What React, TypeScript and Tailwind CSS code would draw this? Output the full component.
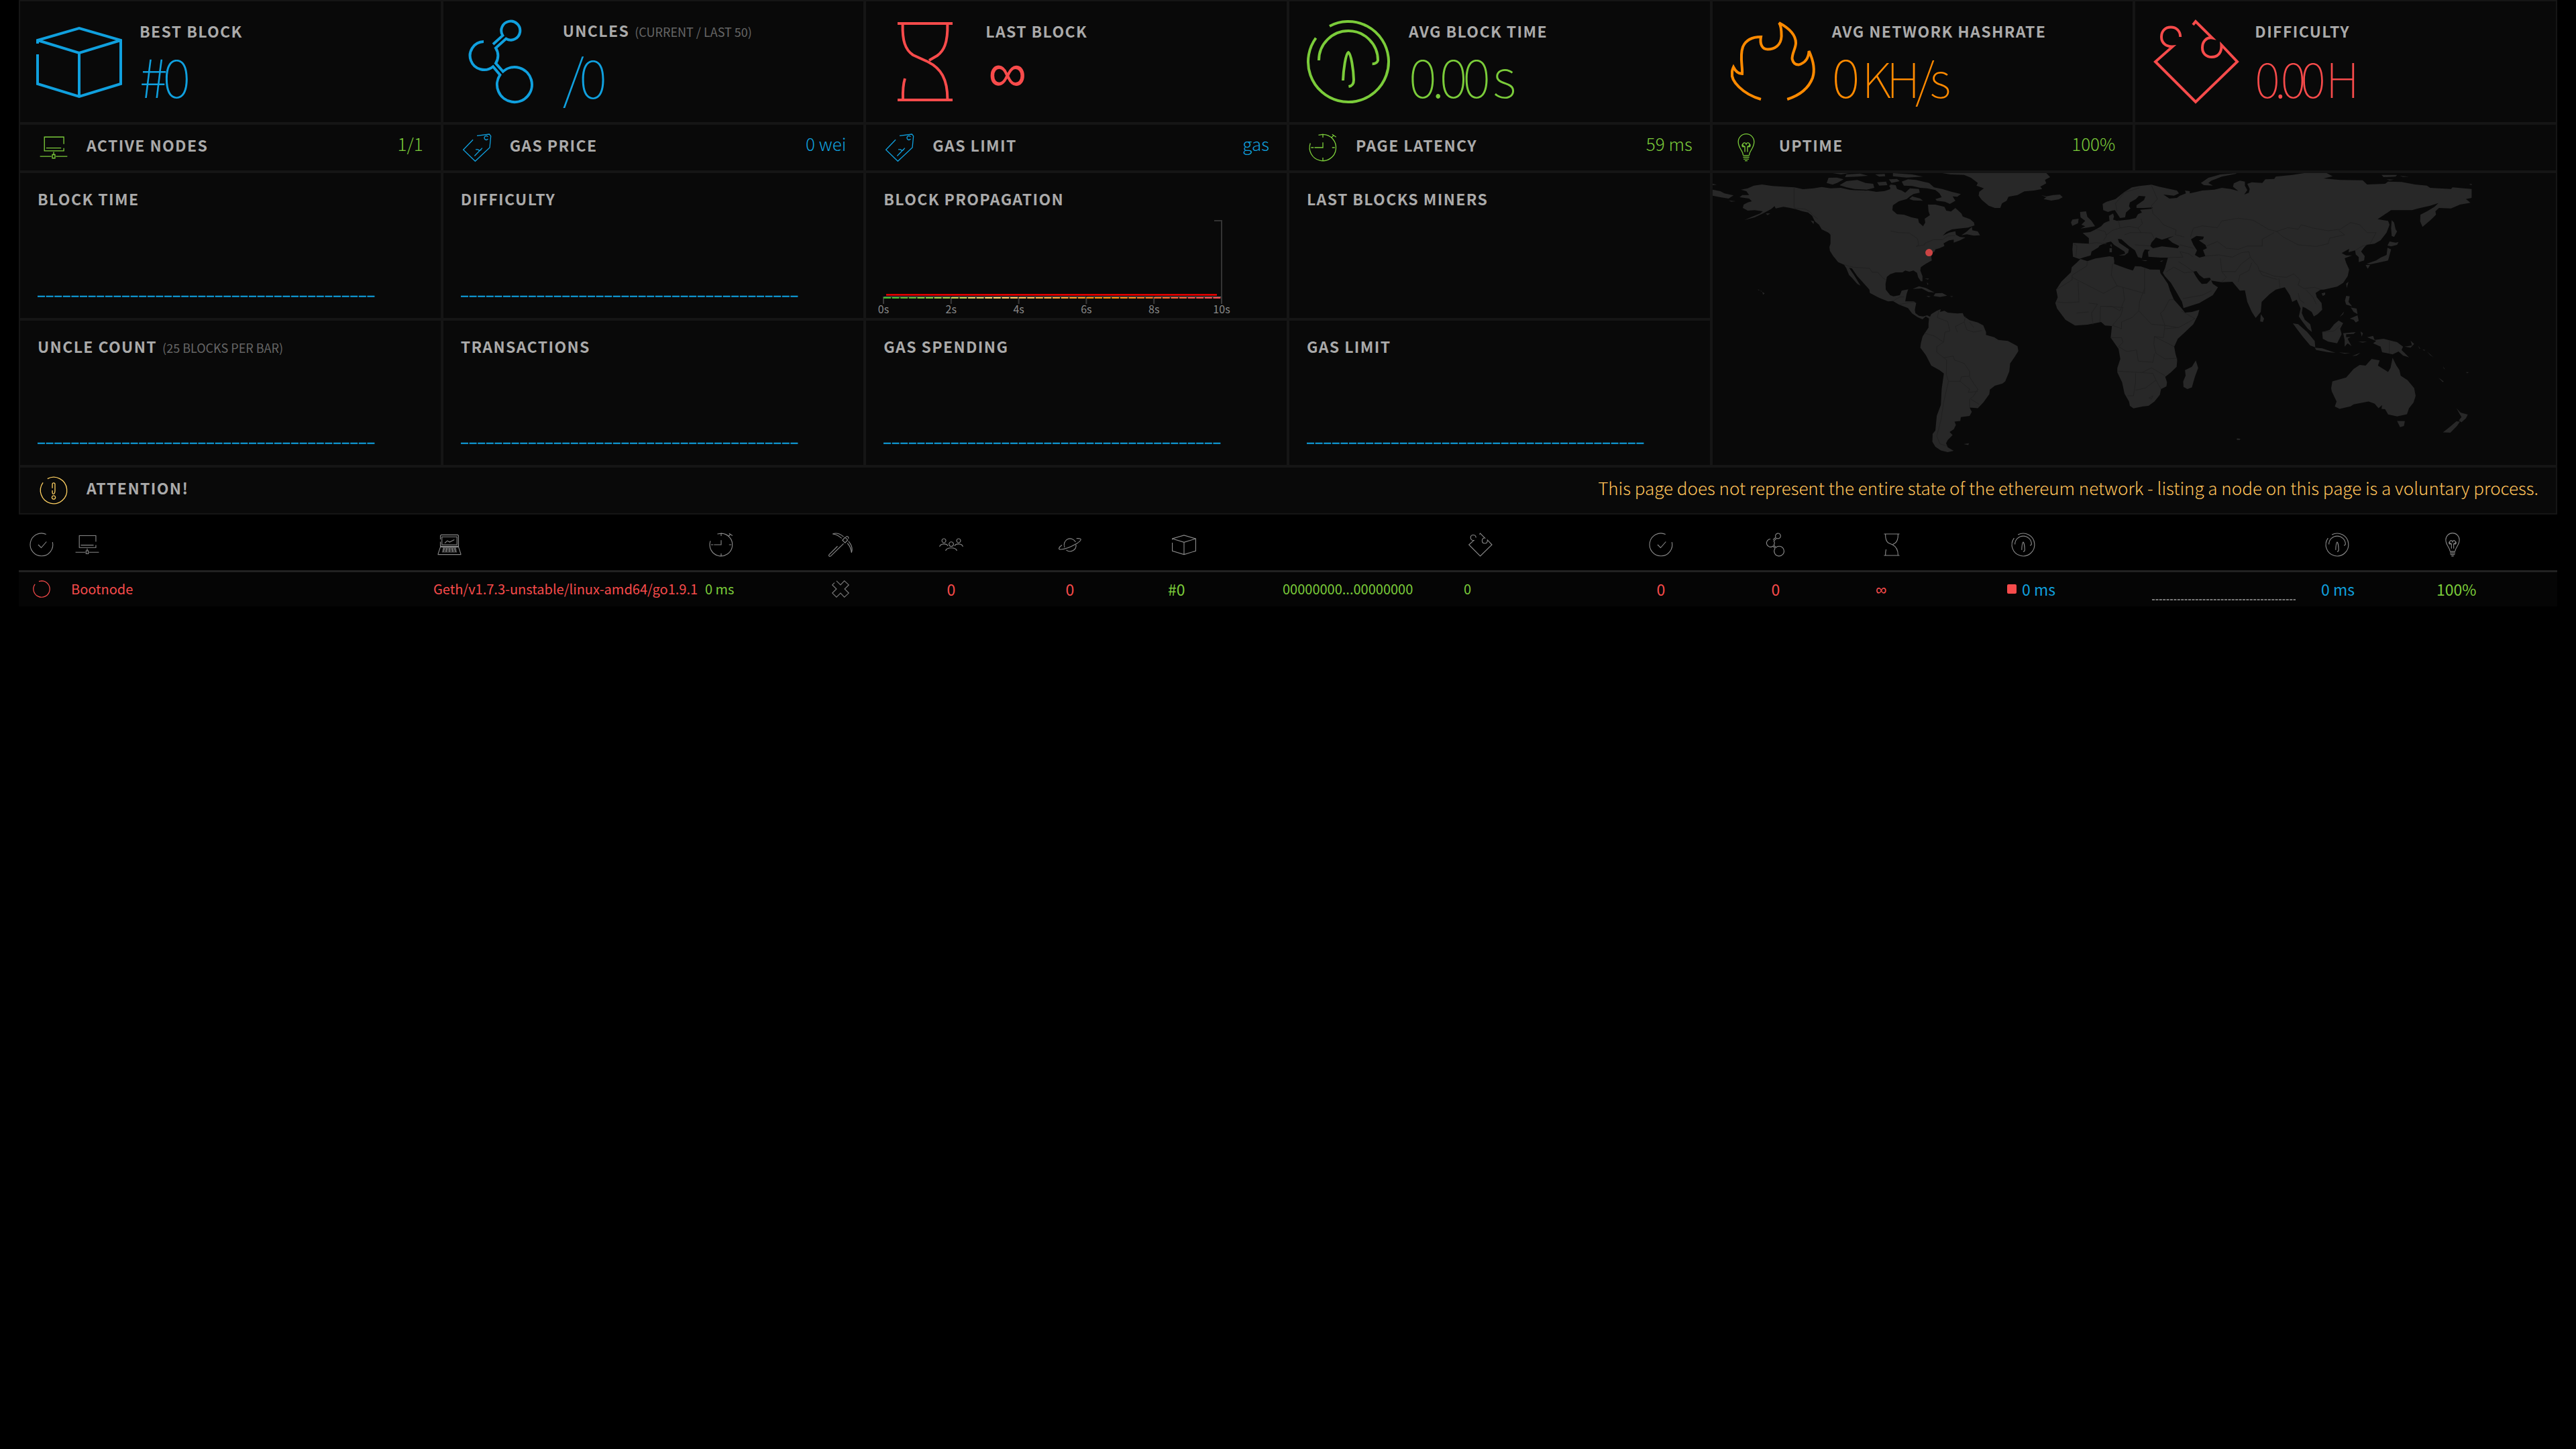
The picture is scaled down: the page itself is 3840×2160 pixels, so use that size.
import React from "react";

type IconName =
  | "block" | "uncles" | "hourglass" | "gauge" | "flame" | "puzzle" | "monitor" | "tag"
  | "clock" | "bulb" | "warning" | "check" | "laptop" | "pickaxe" | "people" | "planet"
  | "ring" | "cross";

const shapes: Record<IconName, React.ReactNode> = {
  block: <path d="M1 18.5V16L32 7l31 9v32.5L32 58 1 48.5V26.5M1 16l31 9.5L63 16M32 25.5V58" />,
  uncles: (
    <path d="M18 17A10.5 10.5 0 1 0 25 35.6L30.2 41.8A13 13 0 1 0 32.4 39.3L27 33.2A10.5 10.5 0 0 0 27 21.8L34.7 14.9A7 7 0 1 0 32.2 12.5L25 19" />
  ),
  hourglass: (
    <path d="M11.5 3.5h41M11.5 60.5h41M15.3 4C15 16 17 23 23 27L34 32C44 37 48.7 45 48.7 60M48.7 4C49 18 46 24 41 27.5L35 31M17 44.5C15.6 49 15.3 54 15.5 60" />
  ),
  gauge: (
    <path d="M7.8 14.3A30 30 0 1 0 18 5.5M10 31A22 22 0 0 1 54 31C53.5 32.8 52 33.6 49.8 33.6M28 46C28.3 38 30 26 32 25C34 26 35.8 38 36 45.5C36 48.5 35 50 32.2 50.5" />
  ),
  flame: (
    <path d="M24 60C10 56 1.500 46 2.500 40.5C2.3 39 2.8 37.5 3.5 36C5 39 7 41 10 41C10.5 36 8 28 10.5 21C13 15 18 13.5 24 13.5C23 19 25 22.8 29 22.8C34 22.8 39 20 39.3 13C39.3 9 39 5 37.5 3C45 7 50 12 50 18C50 22 47 26 47.3 30C48 33 50 34.3 52 34.3C57 33 59.5 29 59.8 24C63 31 64.5 38 62.5 44C59.5 52 53 57 43.6 60" />
  ),
  puzzle: (
    <path d="M31 4.5L33 2L45.400 14.3C41 13.5 38 17 38 21.5C38 26 41 28.5 45 28.5C49.5 28.5 52.5 25.5 52.2 19.5L64 32L33 62L3 32L15.8 20.7C11 21 7.5 18 7.5 13.5C7.5 9 10.5 6.3 14.5 6.3C18.5 6.3 21.6 9 21.6 13.5" />
  ),
  monitor: <path d="M55 24V8H11v31.5h44V33M15 33h34M32 42v6M29 48h6v8h-6zM1 52h26M37 52h26" />,
  tag: (
    <path d="M23 14L1 37L28 63L61 32L63.5 6L60 1.5L32 5M57 7.5A4.5 4.5 0 1 0 57 12.5M26.5 51L44 33M29 36.5L34 36.5L38 39L42 36" />
  ),
  clock: (
    <path d="M3.5 22A30 30 0 1 0 32 2M22 3.5L32 2V9M5 32h6M53 32h6M32 55v6M13 32h19V20M51 10l6-6M53 2l9 6" />
  ),
  bulb: (
    <path d="M25 49C25 40 14 33 14 19A18 18 0 0 1 50 19C50 33 39 40 39 49M25 50h14M25 54h14M26 58h12M29 62h6M29 42V29M35 42V29M29 29A4 4 0 1 1 32 26A4 4 0 1 1 35 29M29 29C23 33 21 27 24 24M35 29C41 33 43 27 40 24" />
  ),
  warning: (
    <path d="M7.8 14.3A30 30 0 1 0 18 5.5M29 27V18A3 3 0 0 1 35 18V32C35 42 29 42 29 36V32M32 44a4 4 0 1 0 .1 0z" />
  ),
  check: <path d="M44 4.4A30 30 0 1 0 61 25M23 32l8 8 14-16" />,
  laptop: (
    <path d="M8 18V8L10 6H54L56 8V36H8V24M12 11H52V32H12ZM8 38L2 56V58H62V56L56 38ZM14 41h36M13 46h38M12 51h40M18 41l-3 10M25 41l-2 10M32 41v10M39 41l2 10M46 41l3 10M19.5 27.5L26.5 21.5L32.5 25L45 18.5" />
  ),
  pickaxe: (
    <path d="M24 36L2 58C-1 62 3 64 6 62L40 29M44 12.5L51 19.5L44 27L37 20ZM35 15C27 8 20 4 11 3.5C22 -1 32 4 40 11M46 12C48 8 54 10 53 16M50 28C56 34 60 42 61 53C65 42 60 31 53 23" />
  ),
  people: (
    <path d="M12.5 16a5.3 5.3 0 1 0 .1 0zM51.5 16a5.3 5.3 0 1 0 .1 0zM32 24.500a6 6 0 1 0 .1 0zM1 37C4 28 20 28 23 35M17 48C20 38 44 38 47 48M41 35C44 28 60 28 63 37" />
  ),
  planet: (
    <path d="M18 39A16 16 0 1 1 47 25M48 32A16 16 0 0 1 22 46M10.700 33C2 39 0 44.500 7 44.500C18 45 34 38 50 29C62 21 67 14 49 15.500" />
  ),
  ring: <path d="M7.8 14.3A30 30 0 1 0 32 2L22 4" />,
  cross: <path d="M10 9L2 17L17 32L2 47L17 62L32 47L46 62L62 47L47 32L62 17L46 2L32 17L17 2" />,
};

function Icon({ name, className, stroke = 2 }: { name: IconName; className: string; stroke?: number }) {
  return (
    <svg
      aria-hidden="true"
      viewBox="0 0 64 64"
      className={`shrink-0 overflow-visible ${className}`}
      fill="none"
      stroke="currentColor"
      strokeWidth={stroke}
    >
      {shapes[name]}
    </svg>
  );
}

const cell = "border-2 border-[#151515] bg-[#090909]";

function Label({ children, note }: { children: React.ReactNode; note?: string }) {
  return (
    <h2 className="text-[23px] leading-[30px] font-bold tracking-[0.06em] whitespace-nowrap text-[#aaa]">
      {children}
      {note && <small className="ml-2 text-[18px] font-normal tracking-normal text-[#666]">{note}</small>}
    </h2>
  );
}

function Big({ icon, label, note, color, children }: {
  icon: IconName; label: string; note?: string; color: string; children: React.ReactNode;
}) {
  return (
    <section className={`${cell} flex min-h-[184px] items-center gap-[26px] pl-6`}>
      <Icon name={icon} className={`size-32 ${color}`} />
      <div className="pt-2">
        <Label note={note}>{label}</Label>
        <p className={`h-[100px] text-[80px] leading-[100px] font-thin tracking-[-0.09em] whitespace-nowrap ${color}`}>{children}</p>
      </div>
    </section>
  );
}

function Small({ icon, label, value, color }: { icon: IconName; label: string; value: string; color: string }) {
  return (
    <section className={`${cell} flex min-h-[72px] items-center pr-[26px] pl-[29px]`}>
      <Icon name={icon} className={`size-[42px] ${color}`} />
      <div className="ml-7 flex-1 pb-2"><Label>{label}</Label></div>
      <span className={`pb-3 text-[26px] leading-[30px] font-light ${color}`}>{value}</span>
    </section>
  );
}

const slots = Array.from({ length: 40 }, (_, i) => i);

function Bars() {
  return (
    <svg aria-hidden="true" viewBox="0 0 506 3" className="block w-[506px]" fill="#10a0de">
      {slots.map((i) => (
        <g key={i}>
          <rect x={i * 12.6} y={0} width={11} height={1} opacity={0.3} />
          <rect x={i * 12.6} y={1} width={11} height={2} opacity={0.9} />
        </g>
      ))}
    </svg>
  );
}

function Chart({ label, note, bars = true }: { label: string; note?: string; bars?: boolean }) {
  return (
    <section className={`${cell} flex min-h-[219px] flex-col justify-between px-[26px] pt-[23px] pb-[31px]`}>
      <Label note={note}>{label}</Label>
      {bars && <Bars />}
    </section>
  );
}

const heat = ["#3fbf2a", "#58b82f", "#7bcc3a", "#9bcb3f", "#c0cf4c", "#e0c75c", "#ffd162", "#ffc35a", "#ffb74f", "#ffa93a", "#ff9e2c", "#ff9318", "#ff8a00", "#ff8a00", "#ff8410", "#fb7318", "#fb6523", "#f85a30", "#f74b40", "#f74b4b"];

function Propagation() {
  return (
    <section className={`${cell} flex min-h-[219px] flex-col px-[26px] pt-[23px]`}>
      <Label>BLOCK PROPAGATION</Label>
      <svg role="img" aria-label="Block propagation histogram" viewBox="0 0 506 144" className="mt-[14px] block w-[506px] overflow-visible">
        <path d="M493 4H504V128" fill="none" stroke="#333" strokeWidth="2" />
        <path d="M0 117.500H504" stroke="#666" strokeWidth="1" />
        {[0, 2, 4, 6, 8, 10].map((s) => (
          <g key={s}>
            <rect x={s * 50.4 - 1} y={117} width={2} height={11} fill="#3a3a3a" />
            <text x={s * 50.4} y={142} textAnchor="middle" className="text-[16px]" fill="#888">{s}s</text>
          </g>
        ))}
        <rect x="4" y="113" width="493" height="3" fill="#b00000" />
        <rect x="4" y="114" width="493" height="1" fill="#ff0000" />
        {slots.map((i) => <rect key={i} x={i * 12.6} y={118} width={11} height={2} fill={heat[Math.floor(i / 2)]} />)}
      </svg>
    </section>
  );
}

function WorldMap() {
  return (
    <section className={`${cell} col-span-2 row-span-2`}>
      <svg role="img" aria-label="Node locations" viewBox="0 0 1257 435" className="block w-full">
        <g fill="#282828">
          <g transform="translate(-13 -8) scale(.4082 .3333)">
            <path d="M135 98L160 92L182 80L212 75L250 82L330 88L362 96L400 92L430 86L462 92L500 90L530 98L560 104L600 102L630 108L660 104L680 96L680 75L700 78L705 95L722 102L735 112L752 92L785 95L788 112L765 118L752 128L740 140L712 150L690 168L688 190L705 208L730 210L758 222L782 228L785 245L800 262L808 245L806 228L825 212L820 195L818 165L845 165L878 175L885 192L902 196L918 180L940 205L945 218L972 230L986 245L988 258L965 268L930 272L905 276L885 288L872 304L895 290L918 284L920 300L935 310L955 312L935 325L912 335L912 322L895 325L875 338L878 350L860 360L845 365L842 375L832 382L830 400L832 415L810 430L792 445L790 460L798 485L798 508L792 508L782 490L778 470L765 460L750 465L735 460L725 468L700 468L680 476L668 488L663 520L664 545L680 570L692 575L715 570L722 550L746 544L740 565L735 598L765 598L775 605L770 635L772 650L785 662L800 665L815 660L828 668L822 675L810 665L798 678L780 668L760 652L745 628L712 612L690 596L672 598L640 582L606 560L604 545L580 512L560 485L540 450L530 448L548 480L572 528L560 520L540 492L530 480L520 450L512 434L490 422L472 395L460 372L458 355L462 340L462 300L455 290L430 275L420 255L405 240L395 215L380 200L360 195L335 185L315 180L290 175L262 182L258 172L245 185L215 205L185 222L148 234L170 222L205 205L215 195L185 190L160 192L142 180L145 165L160 155L175 150L165 138L130 132L140 122L165 122L155 105Z" />
            <path d="M722 62L745 52L775 55L800 62L822 68L840 88L870 95L905 108L938 118L925 130L908 128L918 148L898 162L880 152L850 148L845 140L868 132L860 115L845 100L815 92L790 90L760 82L730 80ZM495 78L520 60L560 55L590 68L618 72L622 90L595 98L550 95L520 88ZM455 45L485 44L510 52L490 66L470 76L448 68ZM520 30L570 26L600 36L560 40L515 42ZM625 30L660 28L662 38L640 40ZM690 24L760 30L800 40L740 44L690 38ZM632 65L665 62L670 78L640 80ZM470 24L530 24L500 30ZM675 80L695 78L705 95L685 95ZM760 128L790 138L800 148L765 146L750 140ZM675 52L705 50L715 60L685 68ZM530 100L590 102L580 110L545 106Z" />
            <path d="M940 302L960 285L978 265L980 280L1000 285L1008 302L985 304L960 298ZM426 265L450 274L470 290L472 300L455 290L430 275ZM390 236L402 240L400 252ZM226 205L242 204L232 212ZM762 542L785 530L810 538L842 558L820 556L795 540ZM845 562L870 560L888 572L862 578L838 574ZM812 573L828 575L820 579ZM898 574L910 575L905 578ZM806 496L822 496L818 500ZM814 512L820 520L816 524ZM213 556L222 562L216 568ZM196 544L203 547L200 549ZM206 550L212 552L209 554ZM32 98L60 105L75 115L108 124L90 138L60 132L32 125ZM32 72L47 76L32 78ZM90 146L116 150L100 152Z" />
            <path d="M870 24L1250 24L1264 42L1245 55L1250 70L1228 85L1235 95L1205 102L1170 106L1145 122L1112 130L1105 148L1088 160L1082 180L1062 180L1040 170L1015 145L1003 125L1005 108L1022 92L995 80L1000 68L975 45L950 32L900 30ZM1230 122L1250 128L1275 122L1300 120L1310 132L1295 142L1268 147L1240 140L1250 132Z" />
            <path d="M822 675L830 655L850 640L865 632L862 645L878 640L890 648L925 652L945 650L950 665L970 682L1000 692L1020 705L1030 735L1030 748L1060 758L1075 770L1110 775L1145 798L1148 820L1135 845L1118 875L1115 910L1100 955L1090 965L1062 975L1044 992L1042 1012L1020 1050L1000 1075L970 1072L978 1092L970 1110L938 1115L936 1132L915 1135L920 1150L912 1170L897 1182L908 1195L890 1218L884 1232L890 1250L912 1266L890 1272L865 1264L845 1248L834 1225L835 1190L845 1175L850 1110L865 1060L868 990L876 920L860 905L830 885L810 838L790 805L792 785L798 755L820 715L820 695ZM948 1236L968 1232L965 1240Z" />
            <path d="M1373 198L1395 195L1400 220L1415 238L1428 262L1400 268L1375 272L1392 262L1378 255L1392 238L1375 222ZM1345 232L1368 228L1366 248L1345 260L1340 245Z" />
          </g>
          <g transform="translate(587 -8) scale(.4464 .3333)">
            <path d="M-87 408L-64 418L-37 406L10 396L24 400L26 420L25 430L45 440L70 452L88 460L95 440L115 442L145 455L178 456L180 472L190 490L205 520L212 550L225 590L250 628L262 648L285 645L310 635L305 660L290 700L260 738L238 765L226 800L230 830L236 860L234 890L215 915L196 935L202 960L200 978L182 990L178 1015L160 1045L140 1065L120 1068L90 1076L78 1065L75 1045L60 1010L52 960L36 915L36 895L46 855L40 810L14 760L18 708L-5 706L-18 690L-64 702L-105 706L-137 680L-165 630L-171 605L-163 580L-168 545L-151 510L-119 468L-116 445L-100 425ZM298 862L306 895L295 935L285 982L270 990L257 980L256 955L264 930L262 905L285 890Z" />
            <path d="M-112 336L-59 340L-59 315L-80 292L-55 288L-35 275L-18 262L-9 248L0 242L10 238L8 215L22 205L25 218L22 232L35 238L55 235L75 232L98 225L105 208L118 200L112 188L150 184L155 178L125 180L100 180L100 168L125 145L130 128L108 126L98 140L78 155L75 172L80 182L65 200L62 222L45 225L38 210L28 190L18 192L5 198L-11 190L-13 162L0 152L30 140L60 108L85 88L110 82L150 76L175 85L235 102L242 115L225 125L190 120L210 138L235 135L245 125L265 115L262 102L278 105L278 115L320 102L360 98L385 90L415 95L440 104L422 85L425 70L445 58L462 62L462 80L470 100L460 120L475 112L478 95L470 72L485 65L520 68L530 52L560 50L565 40L620 32L660 24L735 24L755 38L725 48L780 55L855 56L870 75L930 72L940 62L985 64L1030 75L1070 80L1080 90L1150 95L1155 88L1219 95L1219 135L1200 140L1215 157L1180 165L1150 182L1110 180L1098 195L1100 210L1085 230L1072 245L1055 265L1047 240L1048 210L1070 195L1095 175L1108 158L1080 170L1040 182L1020 190L950 190L905 230L940 238L945 255L935 290L915 325L895 340L868 345L858 360L850 375L862 395L860 415L842 422L842 400L832 388L830 370L808 378L810 363L785 382L800 392L820 392L795 405L800 425L810 455L805 485L790 515L770 532L725 545L715 545L698 560L702 580L718 605L720 635L705 655L692 665L685 645L665 628L655 622L652 650L662 680L680 700L686 735L672 720L655 690L642 665L648 630L635 590L620 600L612 570L595 535L565 545L545 565L518 600L515 645L498 672L485 645L470 600L462 548L445 550L420 510L385 512L350 505L345 492L325 495L310 480L300 462L290 465L298 485L308 505L318 520L335 518L348 500L355 520L372 535L355 570L310 605L257 628L252 600L235 560L215 515L195 485L188 470L195 450L200 425L205 402L180 402L140 398L138 375L145 368L128 365L122 380L118 405L105 400L95 370L75 350L50 320L38 318L42 335L75 365L72 380L60 392L40 392L62 385L60 375L25 345L15 330L0 335L-23 348L-27 356L-50 375L-53 392L-78 402L-91 408L-112 398L-114 365Z" />
            <path d="M315 68L340 45L380 30L435 24L430 28L385 40L350 58L340 68L355 80L325 78ZM918 32L970 32L965 40L925 42ZM935 52L960 53L945 57ZM980 37L1010 40L990 41ZM1210 74L1219 72L1219 78ZM952 235L960 245L965 275L970 285L960 310L952 305L950 270ZM945 330L965 335L975 332L970 345L950 352L938 348ZM938 358L950 365L945 390L940 415L905 425L880 432L868 430L900 415L915 402L935 390ZM865 435L880 435L872 452ZM800 518L808 510L802 538ZM718 562L730 558L730 568L722 574ZM515 655L526 675L522 690L513 688Z" />
            <path d="M800 573L812 575L808 600L820 620L800 612L796 595ZM815 625L835 630L838 655L825 645ZM812 675L838 660L842 685L832 692L825 680ZM778 668L793 643L790 655ZM622 696L640 700L670 735L695 775L697 803L680 795L655 755L635 720ZM695 805L720 808L765 828L740 825L700 815ZM720 735L745 725L760 700L775 683L790 695L780 720L785 745L770 785L740 778L722 765ZM790 740L832 735L825 743L800 745L800 758L815 757L805 765L818 798L805 785L795 800L795 770ZM775 826L815 830L795 832ZM820 842L848 827L835 840ZM848 732L856 740L852 755ZM840 778L870 778L855 782ZM870 758L890 752L895 770L925 765L970 780L990 800L985 815L1010 848L990 840L975 822L955 835L920 825L915 800L890 785L900 775ZM995 800L1020 795L1015 773L1027 788L1015 805ZM1040 796L1048 810L1044 808ZM1055 812L1065 816L1060 818ZM1070 822L1092 848L1080 838Z" />
            <path d="M955 850L968 885L978 905L982 930L1005 950L1027 985L1032 1020L1025 1050L1010 1075L1003 1102L970 1112L940 1103L930 1080L918 1078L920 1062L908 1075L895 1055L875 1045L825 1058L815 1067L778 1078L762 1068L768 1045L752 1000L750 985L754 955L800 938L825 900L845 882L865 885L885 855L912 862L906 885L940 913L948 895ZM970 1132L996 1133L993 1155L980 1160ZM1168 1075L1182 1095L1206 1104L1200 1120L1185 1138L1176 1130L1185 1115ZM1168 1134L1180 1135L1170 1155L1148 1185L1123 1183L1145 1160ZM1108 938L1126 956L1122 958ZM1124 888L1130 902L1126 898ZM1200 914L1210 914L1204 919ZM435 1210L447 1212L445 1217L435 1217ZM10 360L18 360L18 378L10 378ZM12 345L17 343L17 357ZM115 413L137 414L130 418ZM178 418L190 414L184 421Z" />
          </g>
        </g>
        <g fill="#090909" transform="translate(587 -8) scale(.4464 .3333)">
          <path d="M165 312L185 322L225 305L205 318L220 335L243 350L238 360L205 355L185 352L155 360L146 350L150 335ZM282 320L300 305L325 308L322 320L308 325L330 345L335 360L322 368L330 395L310 402L295 390L302 370L290 345Z" />
        </g>
        <g fill="none" stroke="#212121" strokeWidth="1">
          <g transform="translate(-13 -8) scale(.4082 .3333)">
            <path vectorEffect="non-scaling-stroke" d="M329 90V180L370 185L385 195L400 215L415 228M682 283L710 290L750 292L780 318L784 345L775 352L806 345L806 338L838 322L870 322L890 305L918 304M512 434L545 445L605 450L615 468L635 468L655 495L665 502M690 596L715 578L730 578M712 612L740 605L770 600" />
            <path vectorEffect="non-scaling-stroke" d="M858 640L852 670L890 688L898 730L880 735L875 780L850 800L850 825L876 850L886 860L885 925L893 955L875 1050L865 1130L850 1200L862 1235L888 1245M805 740L840 752L875 780M925 735L918 710L950 690L955 665M950 690L960 725L985 735L1015 728M970 690L985 715M876 850L910 842L915 860L950 875L970 910L970 932L940 935L935 955L895 955M970 935L985 965L1000 990L985 1020L970 1035L970 1070M935 955L970 990L965 1005L1000 1000M975 1035L1005 1058M1350 340L1362 350L1358 398" />
          </g>
          <g transform="translate(587 -8) scale(.4464 .3333)">
            <path vectorEffect="non-scaling-stroke" d="M-64 418L-66 440L-115 480V502L-168 545M-115 490L-10 562L35 528L55 535L127 562V450M-95 510L-92 600L-137 604L-165 600M20 430L16 480L35 528M127 540L110 600L108 640M55 535L60 590L45 640L18 620L-20 620L-22 690M0 620L55 625L48 660L20 705L50 720L50 690L85 670L108 640L150 700L195 705L180 650L190 640L210 590L225 590M250 640L295 675L240 715L195 705L190 760L160 755L158 790L165 830L195 855L236 852M195 720L240 715M160 755L226 800M14 760L50 760L55 780L40 800L68 822L100 815L106 865L155 870L160 830M36 910L118 916L150 895L195 930M97 920V960L90 1020H70M97 995L130 985L165 950L155 920L118 916M165 950L182 990M142 1030L155 1020L150 1035ZM-60 605L-30 610L-50 650L-45 700M-100 650L-60 645" />
            <path vectorEffect="non-scaling-stroke" d="M150 80L170 140L150 170L155 205L175 230L190 255L232 278L230 300L260 310M35 195L30 160L60 110L110 90M-60 340L-35 335L0 340M-35 275L-5 285L0 305L-10 325M40 235L45 270L20 280L0 300M45 270L75 262L105 270L120 250L115 228M105 270L115 290L80 290L60 300M115 290L150 292L160 320M95 345L145 350M245 345L290 360M245 375L255 400L205 402M245 375L275 385L290 400M240 420L265 440L290 465L260 470L225 445L200 465M255 585L320 570L350 550M280 310L290 270L320 260L370 268L385 238L440 226L490 235L540 275L568 285L605 268L640 275L650 255L690 270L740 282L780 275L815 245L845 255L870 290L900 290L880 340M568 285L590 310L640 345L700 352L740 340L745 315L795 300L775 280M520 350L520 320L560 290M335 350L370 330L400 360L440 365L470 350L520 350M330 395L375 390L420 400L450 380L475 375L480 400L505 440L510 460L560 485L600 490L625 475L645 500L640 525L660 540L695 535L715 545M380 405L385 465L400 490L385 510M385 465L430 465L450 430L480 400M440 510L445 480L475 460L485 425M510 460L520 480L570 500M575 495L580 540M640 560L645 590L660 605M665 545L690 580L700 610M720 735L760 730L780 705M944 772V830M830 370L855 350L870 345" />
          </g>
        </g>
        <circle cx="322.500" cy="118.500" r="5.500" fill="#cc4444" />
      </svg>
    </section>
  );
}

const red = "text-[#f74b4b]";
const green = "text-[#7bcc3a]";
const blue = "text-[#10a0de]";
const orange = "text-[#ff8a00]";

type Column = { width: number; title: string; icon?: IconName; center?: boolean; color: string; size?: string; body: React.ReactNode };

const columns: Column[] = [
  { width: 67, title: "Status", icon: "check", center: true, color: red, body: <Icon name="ring" className="mx-auto block size-[26px]" stroke={3} /> },
  { width: 540, title: "Node name", icon: "monitor", color: red, size: "text-[20px]", body: "Bootnode" },
  { width: 405, title: "Node type", icon: "laptop", color: red, size: "text-[20px]", body: "Geth/v1.7.3-unstable/linux-amd64/go1.9.1" },
  { width: 90, title: "Latency", icon: "clock", color: green, size: "text-[20px]", body: "0 ms" },
  { width: 246, title: "Mining", icon: "pickaxe", center: true, color: "text-[#777]", body: <Icon name="cross" className="mx-auto block size-[26px]" stroke={3} /> },
  { width: 84, title: "Peers", icon: "people", center: true, color: red, body: "0" },
  { width: 270, title: "Pending", icon: "planet", center: true, color: red, body: "0" },
  { width: 171, title: "Last block", icon: "block", color: green, body: "#0" },
  { width: 270, title: "Block hash", color: green, size: "text-[20px]", body: "00000000...00000000" },
  { width: 272, title: "Total difficulty", icon: "puzzle", color: green, size: "text-[20px]", body: "0" },
  { width: 66, title: "Transactions", icon: "check", center: true, color: red, body: "0" },
  { width: 276, title: "Uncles", icon: "uncles", center: true, color: red, body: "0" },
  { width: 196, title: "Last block time", icon: "hourglass", color: red, body: <span className="font-['Liberation_Sans',sans-serif]">∞</span> },
  {
    width: 216, title: "Propagation", icon: "gauge", color: blue,
    body: <span className="flex items-center gap-2"><i className="size-[14px] rounded-xs bg-[#f74b4b]" />0 ms</span>,
  },
  {
    width: 252, title: "Propagation history", color: "text-[#666]",
    body: (
      <svg aria-hidden="true" viewBox="0 0 214 34" className="block w-[214px]">
        <path d="M0 33H214" stroke="#777" strokeWidth="2" strokeDasharray="4 1.400" />
      </svg>
    ),
  },
  { width: 172, title: "Average propagation", icon: "gauge", color: blue, body: "0 ms" },
  { width: 191, title: "Uptime", icon: "bulb", color: green, body: "100%" },
];

export default function App() {
  return (
    <main className="min-h-screen bg-black px-7 font-['Noto_Sans_CJK_SC','Noto_Sans',sans-serif]">
      <div className="grid grid-cols-6">
        <Big icon="block" label="BEST BLOCK" color={blue}>#0</Big>
        <Big icon="uncles" label="UNCLES" note="(CURRENT / LAST 50)" color={blue}>/0</Big>
        <Big icon="hourglass" label="LAST BLOCK" color={red}>
          <span className="block pl-1 font-['Liberation_Sans',sans-serif] leading-[96px] font-normal">∞</span>
        </Big>
        <Big icon="gauge" label="AVG BLOCK TIME" color={green}>0.00 s</Big>
        <Big icon="flame" label="AVG NETWORK HASHRATE" color={orange}>0 <span className="text-[72px] leading-none">KH/s</span></Big>
        <Big icon="puzzle" label="DIFFICULTY" color={red}>
          <span className="text-[72px] leading-none tracking-[-0.11em]">0.00 H</span>
        </Big>

        <Small icon="monitor" label="ACTIVE NODES" value="1/1" color={green} />
        <Small icon="tag" label="GAS PRICE" value="0 wei" color={blue} />
        <Small icon="tag" label="GAS LIMIT" value="gas" color={blue} />
        <Small icon="clock" label="PAGE LATENCY" value="59 ms" color={green} />
        <Small icon="bulb" label="UPTIME" value="100%" color={green} />
        <section className={cell} />

        <Chart label="BLOCK TIME" />
        <Chart label="DIFFICULTY" />
        <Propagation />
        <Chart label="LAST BLOCKS MINERS" bars={false} />
        <WorldMap />
        <Chart label="UNCLE COUNT" note="(25 BLOCKS PER BAR)" />
        <Chart label="TRANSACTIONS" />
        <Chart label="GAS SPENDING" />
        <Chart label="GAS LIMIT" />

        <section className={`${cell} col-span-6 flex min-h-[72px] items-center pr-[26px] pl-[29px]`}>
          <Icon name="warning" className="size-[42px] text-[#ffd162]" />
          <div className="ml-7 flex-1 pb-2"><Label>ATTENTION!</Label></div>
          <p className="pb-2 text-[26px] leading-[30px] font-light text-[#ffc35a]">
            This page does not represent the entire state of the ethereum network - listing a node on this page is a voluntary process.
          </p>
        </section>
      </div>

      <table className="w-full table-fixed border-collapse text-left">
        <colgroup>
          {columns.map((c) => <col key={c.title} style={{ width: c.width }} />)}
        </colgroup>
        <thead>
          <tr className="h-[84px] border-b-3 border-[#222]">
            {columns.map((c) => (
              <th key={c.title} scope="col" aria-label={c.title} className={`pt-2 text-[#888] ${c.center ? "" : "pl-[17px]"}`}>
                {c.icon && <Icon name={c.icon} className={`block size-9 ${c.center ? "mx-auto" : ""}`} />}
              </th>
            ))}
          </tr>
        </thead>
        <tbody>
          <tr className="h-[53px] bg-[#050505]">
            {columns.map((c) => (
              <td key={c.title} className={`whitespace-nowrap leading-[28px] ${c.size ?? "text-[23px]"} ${c.color} ${c.center ? "text-center" : "pl-[11px]"}`}>
                {c.body}
              </td>
            ))}
          </tr>
        </tbody>
      </table>
    </main>
  );
}
